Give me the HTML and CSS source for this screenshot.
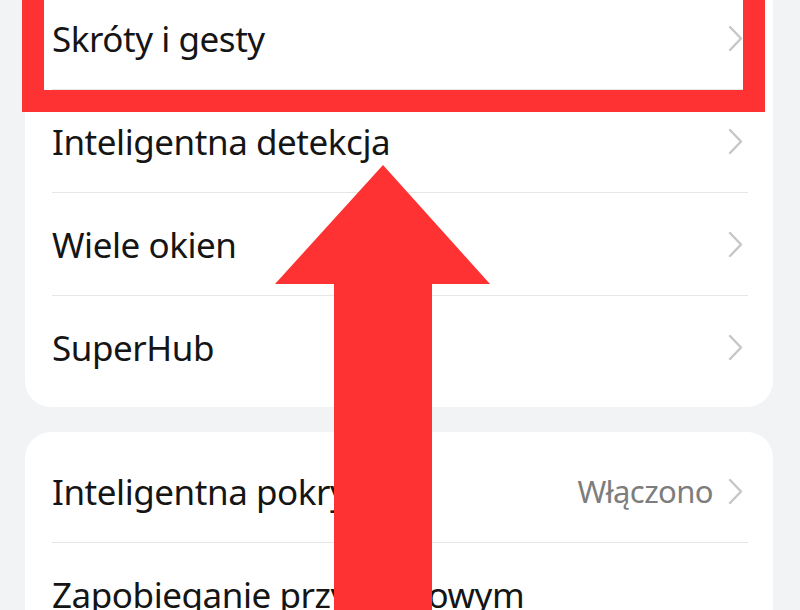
FILE: index.html
```html
<!DOCTYPE html>
<html lang="pl">
<head>
<meta charset="utf-8">
<title>Ustawienia</title>
<link rel="stylesheet" href="styles.css">
</head>
<body>
<div class="page">
  <div class="card card-first">
    <div class="row"><span class="label">Skróty i gesty</span><span class="right"><svg class="chev" viewBox="0 0 15 27"><polyline points="2,2 13,13.5 2,25"/></svg></span></div>
    <div class="row"><span class="label">Inteligentna detekcja</span><span class="right"><svg class="chev" viewBox="0 0 15 27"><polyline points="2,2 13,13.5 2,25"/></svg></span></div>
    <div class="row"><span class="label">Wiele okien</span><span class="right"><svg class="chev" viewBox="0 0 15 27"><polyline points="2,2 13,13.5 2,25"/></svg></span></div>
    <div class="row last"><span class="label">SuperHub</span><span class="right"><svg class="chev" viewBox="0 0 15 27"><polyline points="2,2 13,13.5 2,25"/></svg></span></div>
  </div>
  <div class="card">
    <div class="row"><span class="label">Inteligentna pokrywa</span><span class="right"><span class="value">Włączono</span><svg class="chev" viewBox="0 0 15 27"><polyline points="2,2 13,13.5 2,25"/></svg></span></div>
    <div class="row"><span class="label">Zapobieganie przypadkowym</span><span class="right"></span></div>
  </div>
</div>
<div class="highlight"></div>
<svg class="arrow" viewBox="0 0 800 610" width="800" height="610"><polygon points="383,165 490,284 432,284 432,620 334,620 334,284 275,284"/></svg>
</body>
</html>
```
FILE: styles.css
```css
html, body {
  margin: 0;
  padding: 0;
  height: 610px;
  overflow: hidden;
  background: #f1f3f5;
  font-family: "Noto Sans", "Open Sans", sans-serif;
}
.page {
  display: flex;
  flex-direction: column;
  gap: 25px;
  padding: 0 27px 0 25px;
  margin-top: -21px;
}
.card {
  background: #ffffff;
  border-radius: 26px;
  padding: 8px 0;
}
.row {
  height: 103px;
  margin: 0 25px 0 27px;
  display: flex;
  align-items: center;
  justify-content: space-between;
  border-bottom: 1.5px solid #e6e6e6;
  box-sizing: border-box;
}
.row.last { border-bottom: none; }
.label {
  font-size: 35px;
  color: #151515;
  letter-spacing: -0.45px;
}
.right {
  display: flex;
  align-items: center;
  gap: 15px;
  padding-right: 5px;
}
.value {
  font-size: 31px;
  color: #7d7d7d;
  letter-spacing: -0.6px;
}
.chev {
  width: 15px;
  height: 27px;
  fill: none;
  stroke: #c6c6c6;
  stroke-width: 2.4;
  stroke-linecap: round;
  stroke-linejoin: round;
}
.highlight {
  position: absolute;
  left: 22px;
  top: -30px;
  width: 743px;
  height: 142px;
  box-sizing: border-box;
  border: 22px solid #fe3232;
}
.arrow {
  position: absolute;
  left: 0;
  top: 0;
  fill: #fe3232;
}
```
